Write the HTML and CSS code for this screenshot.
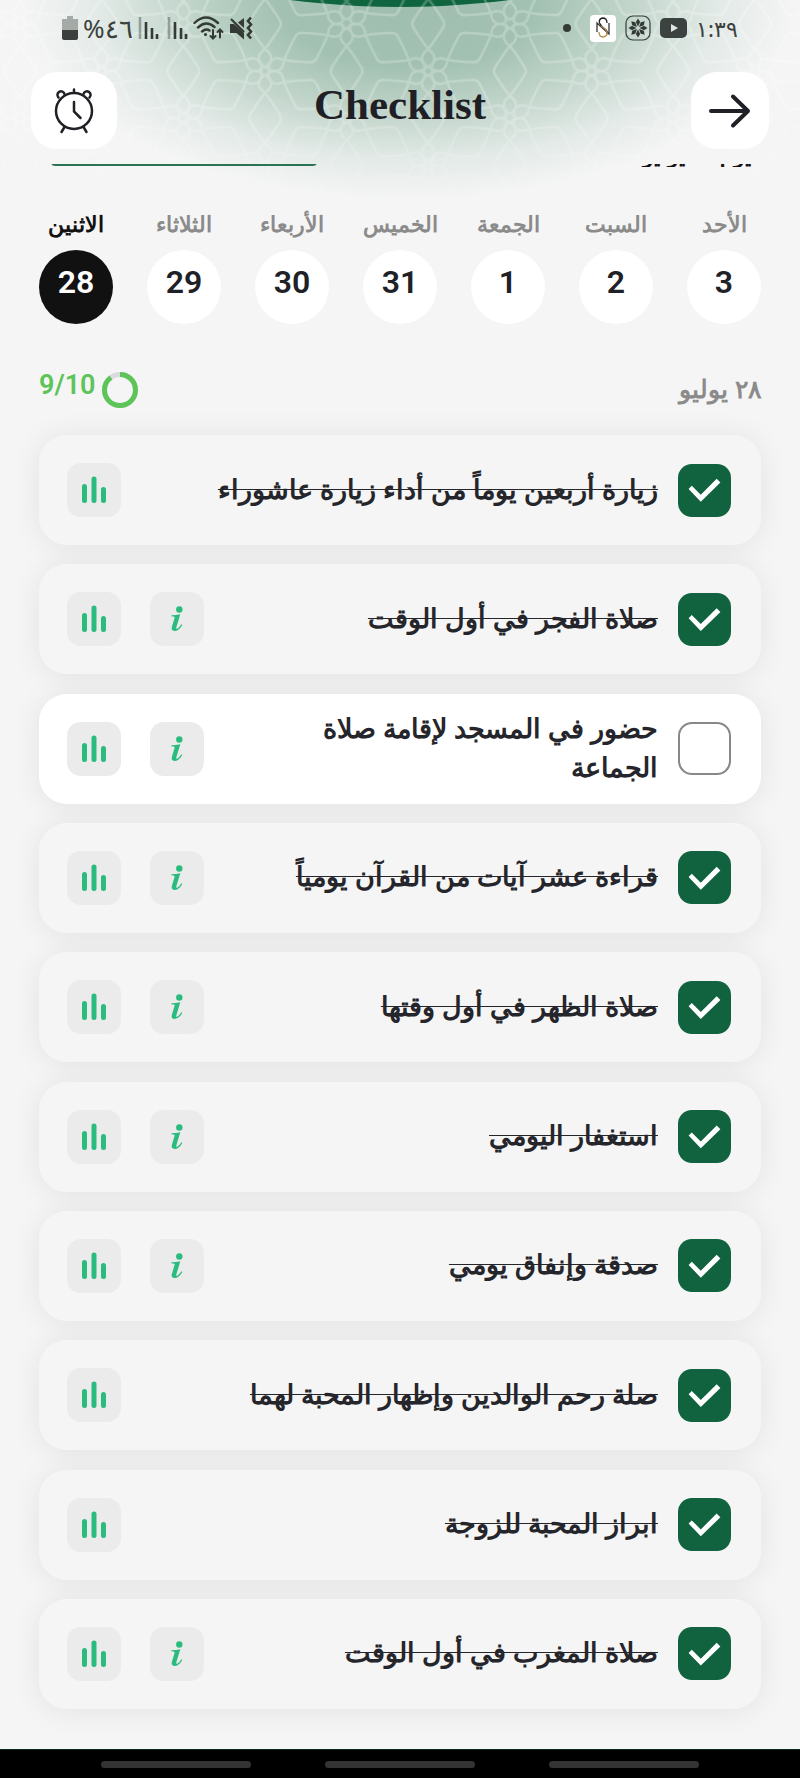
FILE: index.html
```html
<!DOCTYPE html>
<html lang="ar" dir="rtl">
<head>
<meta charset="utf-8">
<meta name="viewport" content="width=device-width, initial-scale=1">
<title>Checklist</title>
<link rel="stylesheet" href="styles.css">
</head>
<body>
<svg class="defs" aria-hidden="true">
  <defs>
    <g id="edge">
      <path d="M0 4C7 8 9 15 1 21Q-3 25-14 42Q-18 47-14 52Q-3 69 1 73C9 79 7 86 0 90"/>
      <path d="M0 4C-7 8-9 15-1 21Q3 25 14 42Q18 47 14 52Q3 69-1 73C-9 79-7 86 0 90"/>
    </g>
    <g id="star">
      <circle r="4"/>
      <use href="#edge"/>
      <use href="#edge" transform="rotate(60)"/>
      <use href="#edge" transform="rotate(-60)"/>
    </g>
    <pattern id="lattice" width="163.3" height="94.2" patternUnits="userSpaceOnUse" patternTransform="translate(20 24)">
      <g fill="none" stroke="#fff" stroke-width="2.6">
        <use href="#star" x="0" y="-94.2"/><use href="#star" x="163.3" y="-94.2"/>
        <use href="#star" x="81.65" y="-47.1"/>
        <use href="#star" x="0" y="0"/><use href="#star" x="163.3" y="0"/>
        <use href="#star" x="81.65" y="47.1"/>
      </g>
    </pattern>
    <symbol id="bars" viewBox="0 0 54 54">
      <path d="M17.5 23.5V37.5M27 16V37.5M36.5 26.5V37.5" fill="none" stroke="#2bbb7e" stroke-width="5" stroke-linecap="round"/>
    </symbol>
    <symbol id="info" viewBox="0 0 54 54">
      <circle cx="29.3" cy="17.5" r="3.2" fill="#2bbb7e"/>
      <path d="M21.5 23.3Q26 23.3 30.3 22.3L26.3 35.6Q25.9 37.5 27.6 36.5Q29.6 35.2 31.4 32.3L32.3 32.9Q28.8 39 24.5 39Q20.8 38.8 21.9 34.8L24.6 25.8Q25 24.6 23.6 24.4L21.3 24.3Z" fill="#2bbb7e"/>
    </symbol>
  </defs>
</svg>

<svg class="backdrop" aria-hidden="true">
  <circle cx="50%" cy="-861" r="868" fill="#0f653f"/>
  <rect width="100%" height="100%" fill="url(#lattice)" opacity=".24"/>
</svg>

<div class="status" dir="ltr">
  <div class="status-group">
    <svg width="16" height="24" viewBox="0 0 16 24"><path d="M5 0h6v3h5v11H0V3h5z" fill="#3c433f" opacity=".4"/><path d="M0 14h16v8q0 2-2 2H2q-2 0-2-2z" fill="#3b3f3d"/></svg>
    <span class="status-text">%٤٦</span>
    <svg width="50" height="24" viewBox="0 0 50 24" fill="none" stroke="#343b37" stroke-width="2.6"><path d="M2 1v22M31 1v22" opacity=".4"/><path d="M8 6v17M14 12v11M19 18v5M37 6v17M43 12v11M48 18v5"/></svg>
    <svg width="31" height="25" viewBox="0 0 31 25" fill="none" stroke="#343b37" stroke-width="2.4" stroke-linecap="round"><path d="M1.5 7Q13-4 25 7M5 11.5Q13 4 21.5 11M9 15.5Q13 12 16.5 14.5"/><circle cx="12.5" cy="18.5" r="1.6" fill="#343b37" stroke="none"/><path d="M20 14v8M17.5 20L20 22.5L22.5 20M27 21.5v-8M24.5 16L27 13.5L29.5 16" stroke-width="2"/></svg>
    <svg width="25" height="25" viewBox="0 0 25 25" fill="#343b37"><path d="M1 8h4L15 17v6.5L7.5 17H1zM9 6.5L15 2v10z"/><path d="M2 3l13 13" stroke="#343b37" stroke-width="2.2"/><path d="M22 1.5l-3 3.5 3 3.5-3 3.5 3 3.5-3 3.5 3 3.5" fill="none" stroke="#343b37" stroke-width="2.6"/></svg>
  </div>
  <div class="status-group status-apps">
    <svg class="dot" width="8" height="8" viewBox="0 0 8 8"><circle cx="4" cy="4" r="4" fill="#343b37"/></svg>
    <svg width="26" height="27" viewBox="0 0 26 27"><rect width="26" height="27" rx="4" fill="#fff"/><g fill="none" stroke-width="1.3"><path d="M17 8Q17 3 12.5 3Q8.5 4 9.5 8Q11 11 15 14Q18 16 17 19" stroke="#222"/><path d="M7 17V8L19 19V8" stroke="#333"/><path d="M9 17Q9 22 13 22Q18 21 17 17Q16 14 11 11" stroke="#b58d4a"/></g></svg>
    <svg width="26" height="26" viewBox="-13 -13 26 26"><rect x="-12" y="-12" width="24" height="24" rx="7" fill="none" stroke="#343b37" stroke-width="1.2"/><g fill="#343b37"><path id="petal" d="M0-1.5L-2.2-6L0-9.5L2.2-6Z"/><use href="#petal" transform="rotate(45)"/><use href="#petal" transform="rotate(90)"/><use href="#petal" transform="rotate(135)"/><use href="#petal" transform="rotate(180)"/><use href="#petal" transform="rotate(225)"/><use href="#petal" transform="rotate(270)"/><use href="#petal" transform="rotate(315)"/></g></svg>
    <svg width="27" height="20" viewBox="0 0 27 20"><rect width="27" height="20" rx="5" fill="#3c423f"/><path d="M11 6l7 4-7 4z" fill="#dfe7e3"/></svg>
    <time class="status-text clock">١:٣٩</time>
  </div>
</div>

<header class="header">
  <button class="square" type="button" aria-label="رجوع"><svg width="42" height="36" viewBox="0 0 42 36" fill="none" stroke="#202126" stroke-width="4" stroke-linecap="round" stroke-linejoin="round"><path d="M2 18H39M24 3.5L39 18L24 32.5"/></svg></button>
  <h1 class="title">Checklist</h1>
  <button class="square square-wide" type="button" aria-label="منبه"><svg width="42" height="46" viewBox="0 0 42 46" fill="none" stroke="#202126" stroke-width="2.5" stroke-linecap="round"><circle cx="21" cy="23" r="18"/><path d="M21 14V23.5L27.5 30M21 1.5V4M11.5 39L8.5 44M30.5 39L33.5 44M5.5 9.5A3.6 3.6 0 1 1 11.5 6M30.5 6A3.6 3.6 0 1 1 36.5 9.5"/></svg></button>
</header>

<main class="content">
  <div class="peek">
    <span class="peek-text">يوم ٢٨ يوليو</span>
    <span class="peek-line"></span>
  </div>

  <nav class="days">
    <button class="day" type="button"><span>الأحد</span><b>3</b></button>
    <button class="day" type="button"><span>السبت</span><b>2</b></button>
    <button class="day" type="button"><span>الجمعة</span><b>1</b></button>
    <button class="day" type="button"><span>الخميس</span><b>31</b></button>
    <button class="day" type="button"><span>الأربعاء</span><b>30</b></button>
    <button class="day" type="button"><span>الثلاثاء</span><b>29</b></button>
    <button class="day day-on" type="button" aria-current="date"><span>الاثنين</span><b>28</b></button>
  </nav>

  <div class="summary">
    <h2 class="date">٢٨ يوليو</h2>
    <div class="score">
      <svg width="36" height="36" viewBox="0 0 36 36" fill="none" stroke-width="5"><circle cx="18" cy="18" r="15.5" stroke="#d9dbdf"/><circle cx="18" cy="18" r="15.5" stroke="#5dc558" pathLength="10" stroke-dasharray="9 1" transform="rotate(-90 18 18)"/></svg>
      <span>9/10</span>
    </div>
  </div>

  <ul class="tasks">
    <li class="task"><div class="card"><input class="tick" type="checkbox" id="t1" checked><label class="name" for="t1">زيارة أربعين يوماً من أداء زيارة عاشوراء</label><button class="tool" type="button" aria-label="إحصاءات"><svg><use href="#bars"/></svg></button></div></li>
    <li class="task"><div class="card"><input class="tick" type="checkbox" id="t2" checked><label class="name" for="t2">صلاة الفجر في أول الوقت</label><button class="tool" type="button" aria-label="معلومات"><svg><use href="#info"/></svg></button><button class="tool" type="button" aria-label="إحصاءات"><svg><use href="#bars"/></svg></button></div></li>
    <li class="task"><div class="card"><input class="tick" type="checkbox" id="t3"><label class="name" for="t3">حضور في المسجد لإقامة صلاة الجماعة</label><button class="tool" type="button" aria-label="معلومات"><svg><use href="#info"/></svg></button><button class="tool" type="button" aria-label="إحصاءات"><svg><use href="#bars"/></svg></button></div></li>
    <li class="task"><div class="card"><input class="tick" type="checkbox" id="t4" checked><label class="name" for="t4">قراءة عشر آيات من القرآن يومياً</label><button class="tool" type="button" aria-label="معلومات"><svg><use href="#info"/></svg></button><button class="tool" type="button" aria-label="إحصاءات"><svg><use href="#bars"/></svg></button></div></li>
    <li class="task"><div class="card"><input class="tick" type="checkbox" id="t5" checked><label class="name" for="t5">صلاة الظهر في أول وقتها</label><button class="tool" type="button" aria-label="معلومات"><svg><use href="#info"/></svg></button><button class="tool" type="button" aria-label="إحصاءات"><svg><use href="#bars"/></svg></button></div></li>
    <li class="task"><div class="card"><input class="tick" type="checkbox" id="t6" checked><label class="name" for="t6">استغفار اليومي</label><button class="tool" type="button" aria-label="معلومات"><svg><use href="#info"/></svg></button><button class="tool" type="button" aria-label="إحصاءات"><svg><use href="#bars"/></svg></button></div></li>
    <li class="task"><div class="card"><input class="tick" type="checkbox" id="t7" checked><label class="name" for="t7">صدقة وإنفاق يومي</label><button class="tool" type="button" aria-label="معلومات"><svg><use href="#info"/></svg></button><button class="tool" type="button" aria-label="إحصاءات"><svg><use href="#bars"/></svg></button></div></li>
    <li class="task"><div class="card"><input class="tick" type="checkbox" id="t8" checked><label class="name" for="t8">صلة رحم الوالدين وإظهار المحبة لهما</label><button class="tool" type="button" aria-label="إحصاءات"><svg><use href="#bars"/></svg></button></div></li>
    <li class="task"><div class="card"><input class="tick" type="checkbox" id="t9" checked><label class="name" for="t9">ابراز المحبة للزوجة</label><button class="tool" type="button" aria-label="إحصاءات"><svg><use href="#bars"/></svg></button></div></li>
    <li class="task"><div class="card"><input class="tick" type="checkbox" id="t10" checked><label class="name" for="t10">صلاة المغرب في أول الوقت</label><button class="tool" type="button" aria-label="معلومات"><svg><use href="#info"/></svg></button><button class="tool" type="button" aria-label="إحصاءات"><svg><use href="#bars"/></svg></button></div></li>
  </ul>
</main>

<div class="gestures"><i></i><i></i><i></i></div>
</body>
</html>
```

FILE: styles.css
```css
* { box-sizing: border-box; }

body {
  position: relative;
  display: flex;
  flex-direction: column;
  min-height: 100vh;
  margin: 0;
  background: radial-gradient(ellipse 390px 200px at 51% 0, #9fbeaf 0%, #a2c1b2 33%, #c3d6cc 58%, #e3eae7 80%, #f5f5f5 100%) #f5f5f5 no-repeat;
  color: #25262b;
  font-family: "Noto Sans", sans-serif;
}

button {
  padding: 0;
  border: 0;
  background: none;
  color: inherit;
  font: inherit;
}

.defs { position: absolute; width: 0; height: 0; }

.backdrop {
  position: absolute;
  inset: 0 0 auto;
  z-index: -1;
  width: 100%;
  height: 250px;
  mask-image: linear-gradient(#000 40%, transparent);
}

.status {
  display: flex;
  align-items: center;
  justify-content: space-between;
  height: 56px;
  padding: 0 62px;
}

.status-group { display: flex; align-items: center; gap: 5px; }
.status-apps { gap: 9px; }
.status-text {
  color: #3a413d;
  font-size: 26px;
  line-height: 32px;
}
.clock { font-size: 22px; }
.dot { margin-right: 10px; }

.header {
  display: grid;
  grid-template-columns: 1fr auto 1fr;
  align-items: center;
  margin-top: 16px;
  padding: 0 31px;
}

.square {
  display: grid;
  place-items: center;
  width: 78px;
  height: 77px;
  border-radius: 26px;
  background: #fff;
}
.square-wide { width: 86px; justify-self: end; }

.title {
  margin: 0;
  padding-bottom: 12px;
  color: #1f2026;
  font-family: "Liberation Serif", serif;
  font-size: 43px;
  font-weight: 700;
  line-height: 56px;
}

.content { flex: 1; display: flex; flex-direction: column; padding: 15px 39px 40px; }

/* Bottom sliver of the section scrolled under the header */
.peek {
  display: flex;
  align-items: flex-end;
  justify-content: space-between;
  height: 3px;
  padding: 0 10px 0 12px;
  overflow: hidden;
}
.peek-text { color: #111; font-size: 22px; font-weight: 700; line-height: 26px; }
.peek-line {
  width: 266px;
  height: 40px;
  margin-bottom: 1px;
  border-radius: 4px;
  background: #2b7453;
}

.days {
  display: flex;
  justify-content: space-between;
  margin-top: 40px;
}
.day {
  display: flex;
  flex-direction: column;
  align-items: center;
  gap: 11px;
  width: 74px;
  color: #8b8b8b;
  font-size: 22px;
  font-weight: 700;
  line-height: 32px;
  white-space: nowrap;
}
.day b {
  width: 74px;
  height: 74px;
  padding-bottom: 10px;
  border-radius: 50%;
  background: #fff;
  color: #202126;
  font-family: Roboto, sans-serif;
  font-size: 32px;
  font-weight: 600;
  line-height: 64px;
}
.day-on { color: #111; }
.day-on b { background: #111; color: #fff; }

.summary {
  display: flex;
  align-items: center;
  justify-content: space-between;
  height: 36px;
  margin-top: 48px;
}
.date { margin: 0; padding-bottom: 4px; color: #8b8b8b; font-size: 25px; font-weight: 700; line-height: 32px; }
.score { display: flex; align-items: center; gap: 6px; }
.score span {
  padding-bottom: 10px;
  color: #5dc45a;
  font-family: Roboto, sans-serif;
  font-size: 27px;
  font-weight: 600;
  line-height: 30px;
}

.tasks {
  flex: 1;
  display: flex;
  flex-direction: column;
  justify-content: space-between;
  gap: 19px;
  margin: 27px 0 0;
  padding: 0;
  list-style: none;
}
.task {
  border-radius: 28px;
  box-shadow: 0 2px 30px rgba(0, 0, 0, .08);
}
.card {
  position: relative;
  z-index: 1;
  display: flex;
  align-items: center;
  gap: 29px;
  min-height: 110px;
  padding: 0 30px 0 28px;
  border-radius: 28px;
  background: #f5f5f5;
}
.card:has(.tick:not(:checked)) { background: #fff; }

.tick {
  appearance: none;
  flex: none;
  width: 53px;
  height: 53px;
  margin: 0;
  border: 2px solid #888;
  border-radius: 14px;
}
.tick:checked { border: 0; background: #11633f; }
.tick:checked::before {
  content: "";
  display: block;
  height: 100%;
  background: #fff;
  clip-path: polygon(20% 48%, 26% 42%, 43% 59%, 73% 29%, 80% 36%, 43% 72%);
}
.name {
  flex: 1;
  margin-right: -9px;
  padding: 0 0 4px 36px;
  font-size: 27px;
  font-weight: 700;
  line-height: 39px;
}
.tick:checked + .name { text-decoration: line-through 1px; }

.tool {
  flex: none;
  width: 54px;
  height: 54px;
  border-radius: 14px;
  background: #ebebeb;
}
.tool svg { display: block; width: 54px; height: 54px; }

.gestures {
  display: flex;
  align-items: center;
  justify-content: center;
  gap: 74px;
  height: 29px;
  border-top: 1px solid #0b2a1c;
  background: #000;
}
.gestures i { width: 150px; height: 7px; border-radius: 4px; background: #333; }
```
